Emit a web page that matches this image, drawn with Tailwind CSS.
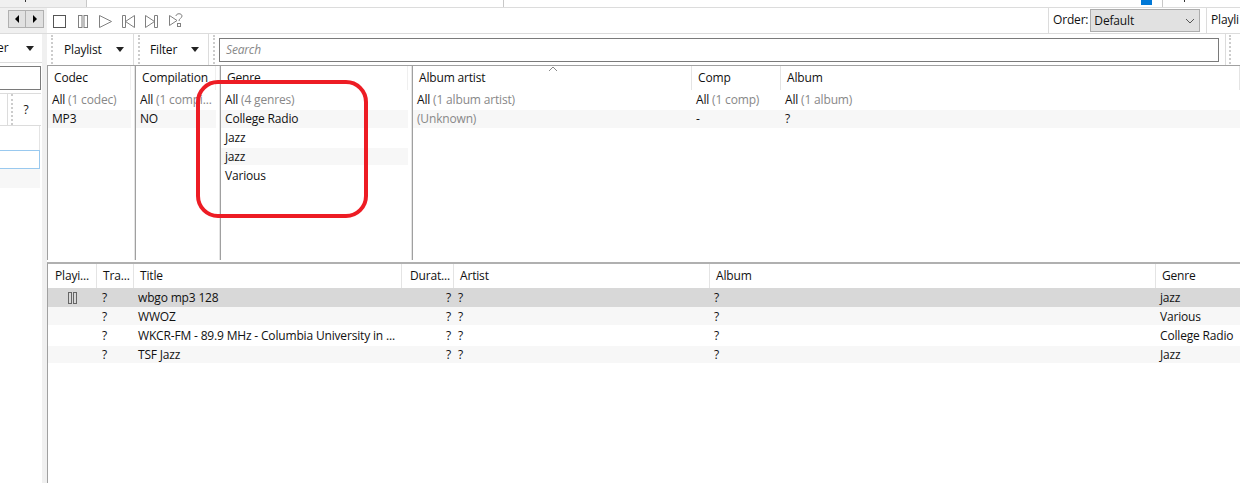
<!DOCTYPE html>
<html><head><meta charset="utf-8">
<script src="https://cdn.jsdelivr.net/npm/@tailwindcss/browser@4"></script>
</head>
<body class="w-[1240px] h-[483px] overflow-hidden bg-white text-[12px] leading-[16px] tracking-[-0.17px] text-[#111] font-['Open_Sans','Noto_Sans',sans-serif]">
<div class="flex flex-col h-[483px]">
  <!-- top strip -->
  <div class="h-[8px] flex shrink-0 border-b border-[#dcdcdc]">
    <div class="w-[87px] bg-[#f0f0f0] border-r border-[#c8c8c8] pl-[25px]"><div class="w-px h-[2px] bg-[#333]"></div></div>
    <div class="w-[417px] border-r border-[#c8c8c8]"></div>
    <div class="flex-1 flex justify-end pr-[55px]">
      <div class="w-[11px] h-[5px] bg-[#0078d7] mr-[10px]"></div>
      <div class="w-px bg-[#c8c8c8]"></div>
      <div class="w-[22px] flex justify-end"><div class="w-px h-[2px] bg-[#333]"></div></div>
    </div>
  </div>
  <!-- toolbar -->
  <div class="h-[26px] flex shrink-0 border-b border-[#dcdcdc]">
    <div class="w-[47px] shrink-0 bg-[#f0f0f0] flex justify-end items-start pt-[2px] pr-[3px]">
      <div class="flex border border-[#b0b0b0] h-[18px] bg-[#e1e1e1]">
        <div class="w-[17px] flex items-center justify-center border-r border-[#b0b0b0]"><div class="border-y-[4px] border-y-transparent border-r-[4px] border-r-black"></div></div>
        <div class="w-[17px] flex items-center justify-center"><div class="border-y-[4px] border-y-transparent border-l-[4px] border-l-black"></div></div>
      </div>
    </div>
    <div class="flex items-center gap-[9px] pl-[6px] pt-[1px] flex-1">
      <svg width="14" height="14" viewBox="0 0 14 14" fill="none" stroke="#555"><rect x="0.5" y="1.5" width="12" height="12"/></svg>
      <svg width="14" height="14" viewBox="0 0 14 14" fill="none" stroke="#808080"><rect x="2.5" y="1.5" width="3.5" height="12"/><rect x="8" y="1.5" width="3.5" height="12"/></svg>
      <svg width="14" height="14" viewBox="0 0 14 14" fill="none" stroke="#808080"><path d="M0.5 1.5 L12.5 7.5 L0.5 13.5 Z"/></svg>
      <svg width="14" height="14" viewBox="0 0 14 14" fill="none" stroke="#808080"><path d="M0.5 1.5 H3.5 V13.5 H0.5 Z M12.5 1.5 L3.5 7.5 L12.5 13.5 Z"/></svg>
      <svg width="14" height="14" viewBox="0 0 14 14" fill="none" stroke="#808080"><path d="M12.5 1.5 H9.5 V13.5 H12.5 Z M0.5 1.5 L9.5 7.5 L0.5 13.5 Z"/></svg>
      <svg width="16" height="17" viewBox="0 0 16 17" fill="none" stroke="#808080" class="-mt-[2px]"><path d="M1.5 3.5 L9 8.5 L1.5 13.5 Z"/><path d="M8 4 C8 1 14 1 14 4 C14 6.5 11 6 11 9"/><rect x="9.5" y="11.5" width="3" height="3"/></svg>
    </div>
    <div class="w-[159px] shrink-0 border-x border-[#dcdcdc] flex items-center pl-[4px] gap-[2px]">
      <span class="-mt-[2px]">Order:</span>
      <div class="w-[110px] h-[23px] bg-[#e1e1e1] border border-[#adadad] flex items-center justify-between pl-[3px] pr-[4px]">
        <span>Default</span>
        <svg width="10" height="6" viewBox="0 0 10 6" fill="none" stroke="#555"><path d="M1 1 L5 5 L9 1"/></svg>
      </div>
    </div>
    <div class="w-[33px] shrink-0 overflow-hidden whitespace-nowrap flex items-center pl-[4px] -mt-[2px]">Playli</div>
  </div>
  <div class="flex-1 flex min-h-0">
    <!-- left rail -->
    <div class="w-[47px] shrink-0 flex">
      <div class="w-[42px] flex flex-col">
        <div class="h-[29px] flex items-center justify-between pr-[8px] border-b border-[#dcdcdc] overflow-hidden">
          <span class="-ml-[7px]">ter</span>
          <div class="border-x-[4px] border-x-transparent border-t-[5px] border-t-[#222]"></div>
        </div>
        <div class="h-[24px] mt-[3px] border-y border-r border-[#7a7a7a] w-[41px]"></div>
        <div class="h-[33px] mt-[3px] flex border-y border-[#dcdcdc] w-[41px]">
          <div class="w-[8px] border-r border-[#dcdcdc]"></div>
          <div class="ml-[3px] border-l-2 border-dotted border-[#ccc]"></div>
          <div class="flex-1 flex items-center justify-center pr-[2px]">?</div>
        </div>
        <div class="h-[24px] w-[40px] border-r border-[#e4e4e4]"></div>
        <div class="h-[19px] w-[40px] border border-l-0 border-[#99c9ef]"></div>
        <div class="h-[19px] w-[40px] bg-[#f7f7f7]"></div>
      </div>
      <div class="w-[5px] bg-[#f0f0f0]"></div>
    </div>
    <!-- main -->
    <div class="flex-1 min-w-0 flex flex-col">
      <!-- filter toolbar -->
      <div class="h-[31px] flex shrink-0 items-stretch">
        <div class="w-[87px] border-r border-[#dcdcdc] flex items-center pl-[17px] gap-[14px] relative">
          <span class="absolute left-[4px] top-[1px] bottom-[1px] border-l-2 border-dotted border-[#ccc]"></span>
          <span>Playlist</span>
          <div class="border-x-[4px] border-x-transparent border-t-[5px] border-t-[#222]"></div>
        </div>
        <div class="w-[75px] border-r border-[#dcdcdc] flex items-center pl-[16px] gap-[14px] relative">
          <span class="absolute left-[4px] top-[1px] bottom-[1px] border-l-2 border-dotted border-[#ccc]"></span>
          <span>Filter</span>
          <div class="border-x-[4px] border-x-transparent border-t-[5px] border-t-[#222]"></div>
        </div>
        <div class="flex-1 flex items-start pl-[10px] pt-[4px] relative">
          <span class="absolute left-[4px] top-[1px] bottom-[1px] border-l-2 border-dotted border-[#ccc]"></span>
          <div class="w-[1000px] h-[24px] border border-[#7a7a7a] flex items-center pl-[6px] italic text-[#888]">Search</div>
          <div class="ml-[6px] -mt-[4px] h-[31px] w-[4px] border-l border-[#dcdcdc]"></div>
          <div class="-mt-[3px] h-[29px] border-l-2 border-dotted border-[#ccc]"></div>
        </div>
      </div>
      <!-- filter panes -->
      <div class="h-[195px] shrink-0 flex border-t border-[#a0a0a0] relative">
        <div class="w-[88px] border-l border-[#a0a0a0] flex flex-col pr-[3px] border-r border-r-[#e4e4e4]">
          <div class="h-[24px] flex items-center pl-[6px] border-r border-[#efefef]">Codec</div>
          <div class="h-[20px] flex items-center pl-[4px] pb-px">All&nbsp;<span class="text-[#888]">(1 codec)</span></div>
          <div class="h-[18px] flex items-center pl-[4px] bg-[#f7f7f7]">MP3</div>
        </div>
        <div class="w-[85px] border-l border-[#a0a0a0] flex flex-col pr-[3px] border-r border-r-[#e4e4e4]">
          <div class="h-[24px] flex items-center pl-[6px] whitespace-nowrap border-r border-[#efefef]">Compilation</div>
          <div class="h-[20px] flex items-center pl-[4px] pb-px whitespace-nowrap overflow-hidden">All&nbsp;<span class="text-[#888]">(1 compi...</span></div>
          <div class="h-[18px] flex items-center pl-[4px] bg-[#f7f7f7]">NO</div>
        </div>
        <div class="w-[192px] border-l border-[#a0a0a0] flex flex-col pr-[3px] border-r border-r-[#e4e4e4]">
          <div class="h-[24px] flex items-center pl-[6px] border-r border-[#efefef]">Genre</div>
          <div class="h-[20px] flex items-center pl-[4px] pb-px">All&nbsp;<span class="text-[#888]">(4 genres)</span></div>
          <div class="h-[18px] flex items-center pl-[4px] bg-[#f7f7f7]">College Radio</div>
          <div class="h-[20px] flex items-center pl-[4px] pb-px">Jazz</div>
          <div class="h-[17px] flex items-center pl-[4px] bg-[#f7f7f7]">jazz</div>
          <div class="h-[21px] flex items-center pl-[4px] pt-px">Various</div>
        </div>
        <div class="flex-1 border-l border-[#a0a0a0] flex flex-col">
          <div class="h-[24px] flex">
            <div class="w-[279px] flex items-center pl-[6px] border-r border-[#e4e4e4]">Album artist</div>
            <div class="w-[89px] flex items-center pl-[6px] border-r border-[#e4e4e4]">Comp</div>
            <div class="flex-1 flex items-center pl-[6px] border-r border-[#e4e4e4]">Album</div>
          </div>
          <div class="h-[20px] flex pb-px">
            <div class="w-[279px] pl-[4px] flex items-center">All&nbsp;<span class="text-[#888]">(1 album artist)</span></div>
            <div class="w-[89px] pl-[4px] flex items-center">All&nbsp;<span class="text-[#888]">(1 comp)</span></div>
            <div class="flex-1 pl-[4px] flex items-center">All&nbsp;<span class="text-[#888]">(1 album)</span></div>
          </div>
          <div class="h-[18px] flex bg-[#f7f7f7]">
            <div class="w-[279px] pl-[4px] flex items-center text-[#888]">(Unknown)</div>
            <div class="w-[89px] pl-[4px] flex items-center">-</div>
            <div class="flex-1 pl-[4px] flex items-center">?</div>
          </div>
        </div>
        <svg class="absolute left-[501px] top-0" width="10" height="6" viewBox="0 0 10 6" fill="none" stroke="#888"><path d="M1 5 L5 1 L9 5"/></svg>
        <!-- annotation -->
        <div class="absolute left-[149px] top-[14px] w-[172px] h-[138px] border-[4px] border-[#ed1c24] rounded-[22px]"></div>
      </div>
      <!-- playlist -->
      <div class="mt-[2px] flex-1 min-h-0 flex flex-col border-l border-[#a0a0a0] border-t-2 border-t-[#b0b0b0]">
        <div class="h-[24px] flex shrink-0 whitespace-nowrap">
          <div class="w-[49px] pl-[7px] flex items-center border-r border-[#e4e4e4]">Playi...</div>
          <div class="w-[37px] pl-[6px] flex items-center border-r border-[#e4e4e4]">Tra...</div>
          <div class="w-[268px] pl-[6px] flex items-center border-r border-[#e4e4e4]">Title</div>
          <div class="w-[52px] pl-[8px] flex items-center border-r border-[#e4e4e4]">Durat...</div>
          <div class="w-[256px] pl-[6px] flex items-center border-r border-[#e4e4e4]">Artist</div>
          <div class="w-[446px] pl-[6px] flex items-center border-r border-[#e4e4e4]">Album</div>
          <div class="flex-1 pl-[6px] flex items-center">Genre</div>
        </div>
        <div class="h-[19px] flex whitespace-nowrap bg-[#d8d8d8]">
          <div class="w-[49px] flex items-center justify-center"><svg width="11" height="12" viewBox="0 0 11 12" fill="none" stroke="#666"><rect x="1.5" y="0.5" width="3" height="11"/><rect x="6.5" y="0.5" width="3" height="11"/></svg></div>
          <div class="w-[37px] pl-[5px] flex items-center">?</div>
          <div class="w-[268px] pl-[4px] flex items-center">wbgo mp3 128</div>
          <div class="w-[52px] pr-[3px] flex items-center justify-end">?</div>
          <div class="w-[256px] pl-[4px] flex items-center">?</div>
          <div class="w-[446px] pl-[4px] flex items-center">?</div>
          <div class="flex-1 pl-[4px] flex items-center">jazz</div>
        </div>
        <div class="h-[18px] flex whitespace-nowrap bg-[#f7f7f7] pt-px">
          <div class="w-[49px]"></div>
          <div class="w-[37px] pl-[5px] flex items-center">?</div>
          <div class="w-[268px] pl-[4px] flex items-center">WWOZ</div>
          <div class="w-[52px] pr-[3px] flex items-center justify-end">?</div>
          <div class="w-[256px] pl-[4px] flex items-center">?</div>
          <div class="w-[446px] pl-[4px] flex items-center">?</div>
          <div class="flex-1 pl-[4px] flex items-center">Various</div>
        </div>
        <div class="h-[21px] flex whitespace-nowrap">
          <div class="w-[49px]"></div>
          <div class="w-[37px] pl-[5px] flex items-center">?</div>
          <div class="w-[268px] pl-[4px] flex items-center">WKCR-FM - 89.9 MHz - Columbia University in ...</div>
          <div class="w-[52px] pr-[3px] flex items-center justify-end">?</div>
          <div class="w-[256px] pl-[4px] flex items-center">?</div>
          <div class="w-[446px] pl-[4px] flex items-center">?</div>
          <div class="flex-1 pl-[4px] flex items-center">College Radio</div>
        </div>
        <div class="h-[17px] flex whitespace-nowrap bg-[#f7f7f7]">
          <div class="w-[49px]"></div>
          <div class="w-[37px] pl-[5px] flex items-center">?</div>
          <div class="w-[268px] pl-[4px] flex items-center">TSF Jazz</div>
          <div class="w-[52px] pr-[3px] flex items-center justify-end">?</div>
          <div class="w-[256px] pl-[4px] flex items-center">?</div>
          <div class="w-[446px] pl-[4px] flex items-center">?</div>
          <div class="flex-1 pl-[4px] flex items-center">Jazz</div>
        </div>
      </div>
    </div>
  </div>
</div>
</body></html>
